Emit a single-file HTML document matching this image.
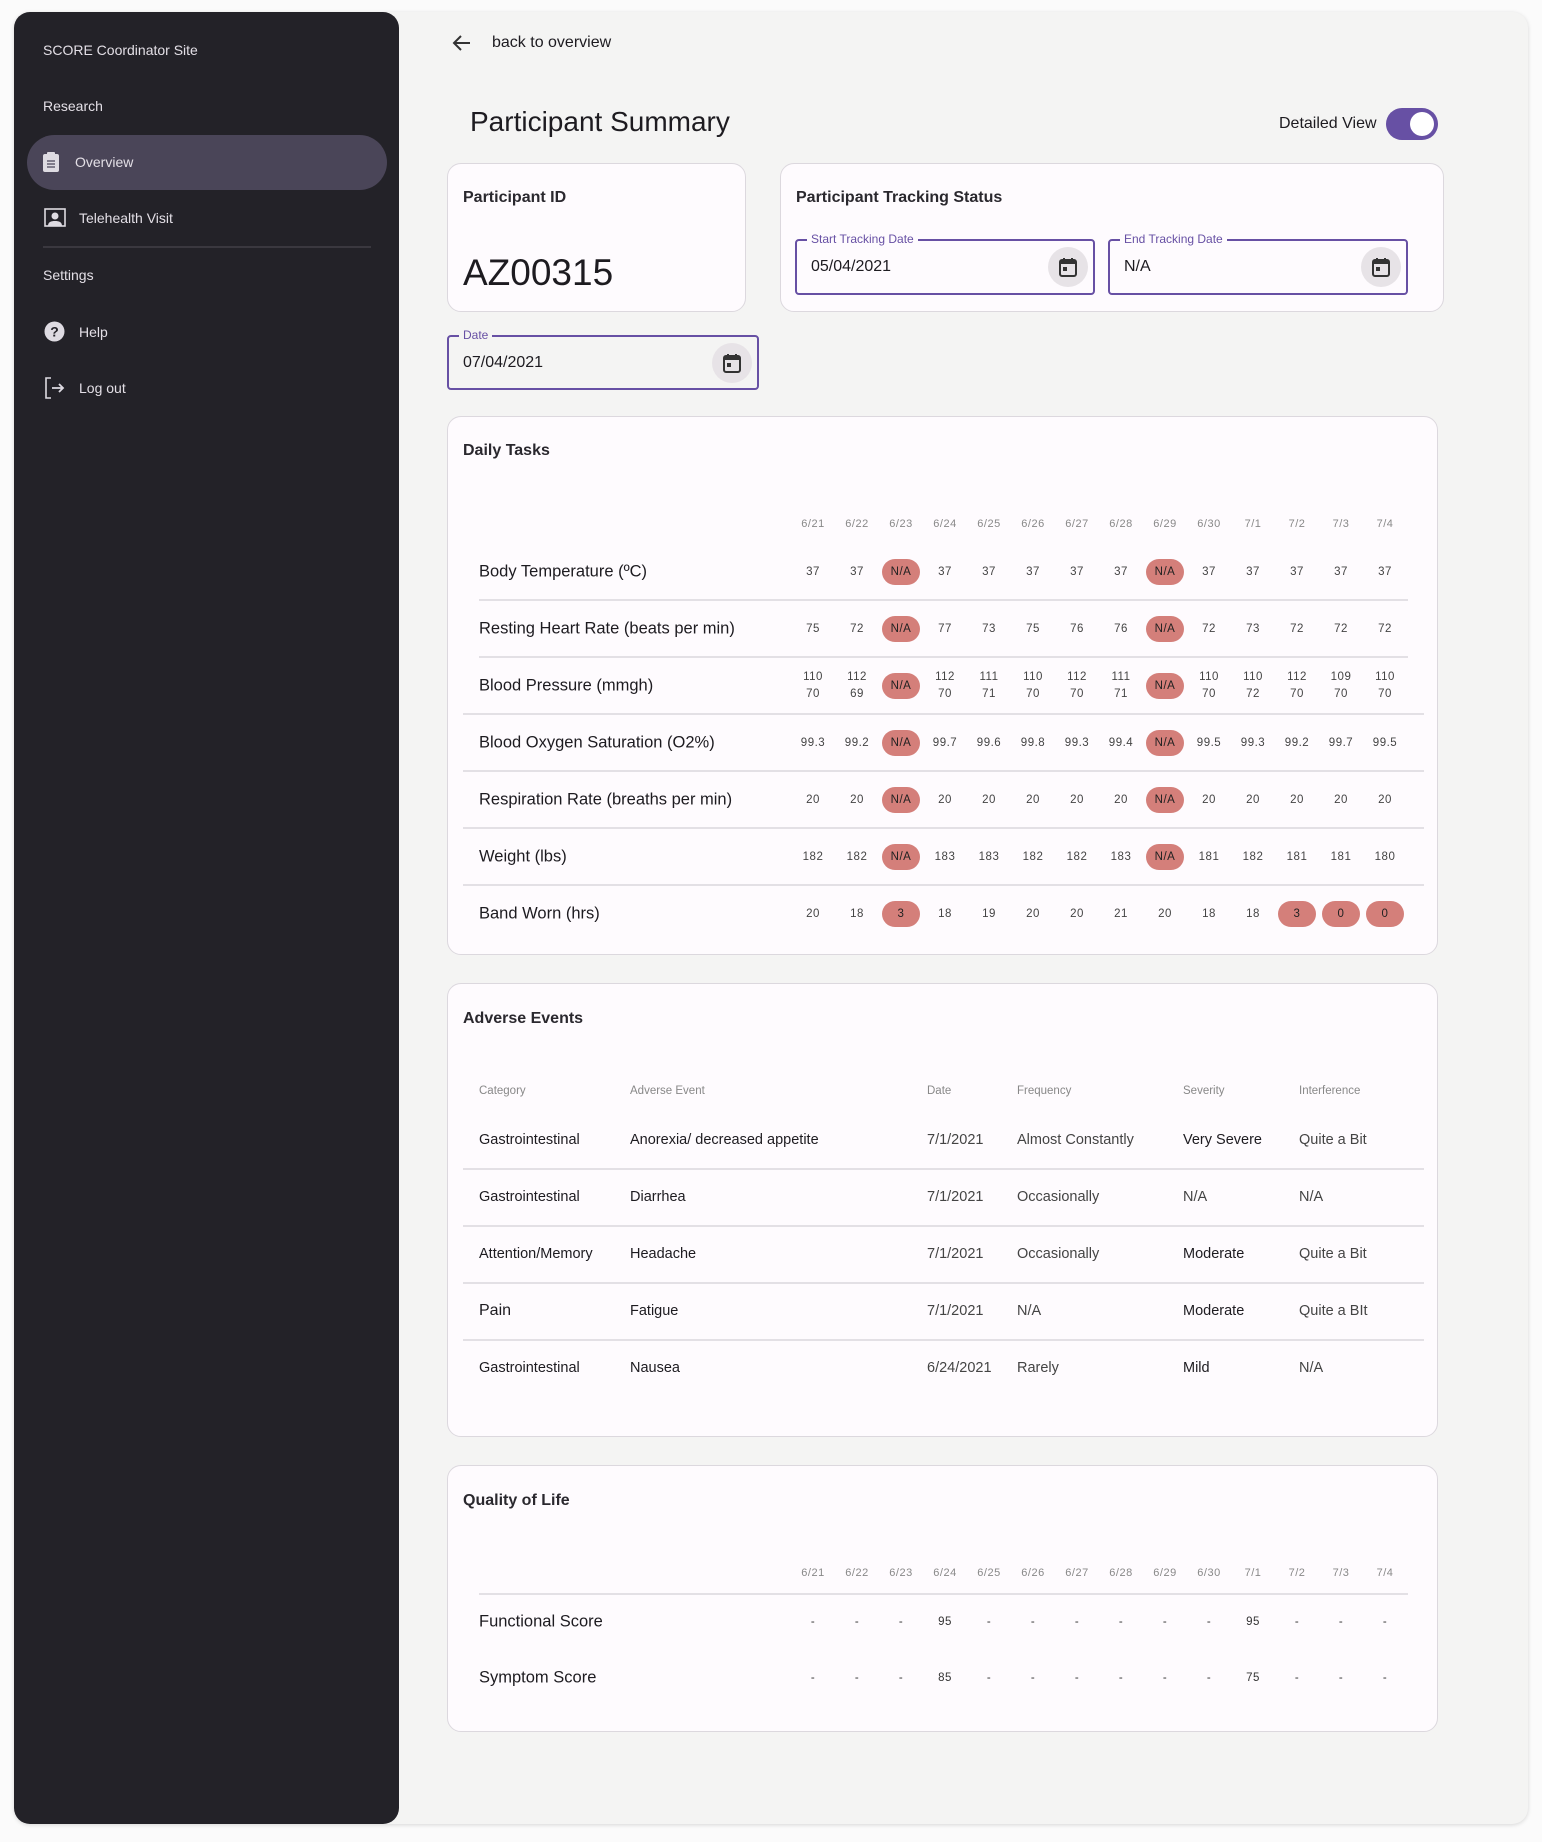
<!DOCTYPE html>
<html><head><meta charset="utf-8"><style>
*{box-sizing:border-box;margin:0;padding:0}
body{width:1542px;height:1842px;background:#fbfbfb;font-family:"Liberation Sans",sans-serif;position:relative;overflow:hidden;color:#1d1b20}
.frame{position:absolute;left:14px;top:12px;width:1514px;height:1812px;background:#f4f4f3;border-radius:16px;box-shadow:0 1px 4px rgba(0,0,0,.15)}
.side{position:absolute;left:14px;top:12px;width:385px;height:1812px;background:#232228;border-radius:16px}
.ab{position:absolute}
.st{position:absolute;color:#e3dfe6;font-size:14px;transform:translateY(-50%)}
.pill{position:absolute;left:27px;top:135px;width:360px;height:55px;background:#4a4558;border-radius:28px}
.card{position:absolute;background:#fefbfe;border:1.5px solid #dcd8de;border-radius:14px}
.ct{position:absolute;left:15px;font-size:16px;font-weight:bold;color:#2a282e;transform:translateY(-50%)}
.field{position:absolute;border:2px solid #6750a4;border-radius:4px}
.field .lb{position:absolute;top:-9px;left:10px;background:#fefbfe;color:#6750a4;font-size:12px;padding:0 4px;line-height:14px}
.fcard .lb{background:#f4f4f3}
.field .v{position:absolute;left:14px;top:50%;transform:translateY(-50%);font-size:16px;color:#1d1b20}
.field .ic{position:absolute;right:5px;top:50%;transform:translateY(-50%);width:40px;height:40px;border-radius:50%;background:#e7e3e7;display:flex;align-items:center;justify-content:center}
.row{position:absolute;left:0;width:100%;height:0}
.row .l{position:absolute;left:31px;top:0;transform:translateY(-50%);font-size:16.5px;color:#1d1b20;white-space:nowrap}
.cells{position:absolute;left:343px;top:0;display:flex}
.c{width:44px;height:0;display:flex;align-items:center;justify-content:center;font-size:11.5px;color:#444;letter-spacing:.5px;text-align:center;line-height:17px}
.c b{font-weight:normal;background:#d47f7a;color:#222;border-radius:13px;width:38px;height:26px;display:flex;align-items:center;justify-content:center;flex:none}
.hd .c{color:#888;font-size:11px}
.dv{position:absolute;height:2px;background:#e3e0e5}
.ae{position:absolute;transform:translateY(-50%);font-size:14.5px;color:#1d1b20;white-space:nowrap}
.ah{position:absolute;transform:translateY(-50%);font-size:11.5px;color:#888}
.q .c{color:#333}
</style></head><body>
<div class="frame"></div>
<div class="side"></div>
<div class="st" style="left:43px;top:50px">SCORE Coordinator Site</div>
<div class="st" style="left:43px;top:106px">Research</div>
<div class="pill"></div>
<svg class="ab" style="left:42px;top:151px" width="18" height="22" viewBox="0 0 18 22"><rect x="1" y="3" width="16" height="18" rx="2" fill="#dedbe2"/><rect x="5" y="1" width="8" height="4" rx="1" fill="#dedbe2"/><path d="M5 10h8M5 13h8M5 16h8" stroke="#4a4558" stroke-width="1.3"/></svg>
<div class="st" style="left:75px;top:162px">Overview</div>
<svg class="ab" style="left:44px;top:208px" width="22" height="20" viewBox="0 0 22 20"><rect x="1" y="1" width="20" height="17" fill="none" stroke="#dedbe2" stroke-width="1.6"/><circle cx="11" cy="8" r="3.5" fill="#dedbe2"/><path d="M4 18c0-4 3-5 7-5s7 1 7 5z" fill="#dedbe2"/></svg>
<div class="st" style="left:79px;top:218px">Telehealth Visit</div>
<div class="ab" style="left:43px;top:246px;width:328px;height:2px;background:#3a383f"></div>
<div class="st" style="left:43px;top:275px">Settings</div>
<svg class="ab" style="left:44px;top:321px" width="21" height="21" viewBox="0 0 21 21"><circle cx="10.5" cy="10.5" r="10" fill="#dedbe2"/><text x="10.5" y="15.5" font-size="14" font-weight="bold" text-anchor="middle" fill="#232228" font-family="Liberation Sans">?</text></svg>
<div class="st" style="left:79px;top:332px">Help</div>
<svg class="ab" style="left:44px;top:377px" width="22" height="22" viewBox="0 0 22 22"><path d="M7 1H2v20h5" fill="none" stroke="#dedbe2" stroke-width="1.6"/><path d="M8 11h11M15 7l4 4-4 4" fill="none" stroke="#dedbe2" stroke-width="1.8"/></svg>
<div class="st" style="left:79px;top:388px">Log out</div>

<svg class="ab" style="left:452px;top:34px" width="20" height="18" viewBox="0 0 20 18"><path d="M18 9H3M9 2L2 9l7 7" fill="none" stroke="#333" stroke-width="2"/></svg>
<div class="ab" style="left:492px;top:34px;font-size:16px;color:#1d1b20">back to overview</div>
<div class="ab" style="left:470px;top:106px;font-size:28px;color:#1d1b20">Participant Summary</div>
<div class="ab" style="left:1279px;top:115px;font-size:16px;color:#1d1b20">Detailed View</div>
<div class="ab" style="left:1386px;top:108px;width:52px;height:32px;border-radius:16px;background:#6750a4"></div>
<div class="ab" style="left:1410px;top:112px;width:24px;height:24px;border-radius:50%;background:#fff"></div>

<div class="card" style="left:447px;top:163px;width:299px;height:149px">
 <div class="ct" style="top:34px">Participant ID</div>
 <div class="ab" style="left:15px;top:88px;font-size:37px;color:#1d1b20">AZ00315</div>
</div>
<div class="card" style="left:780px;top:163px;width:664px;height:149px">
 <div class="ct" style="top:34px">Participant Tracking Status</div>
 <div class="field" style="left:14px;top:75px;width:300px;height:56px"><span class="lb">Start Tracking Date</span><span class="v">05/04/2021</span><span class="ic"><svg width="18" height="20" viewBox="0 0 18 20"><rect x="1" y="3" width="16" height="16" rx="2" fill="none" stroke="#333" stroke-width="2"/><rect x="1" y="3" width="16" height="4" fill="#333"/><path d="M5 1v3M13 1v3" stroke="#333" stroke-width="2"/><rect x="4" y="10" width="4" height="4" fill="#333"/></svg></span></div>
 <div class="field" style="left:327px;top:75px;width:300px;height:56px"><span class="lb">End Tracking Date</span><span class="v">N/A</span><span class="ic"><svg width="18" height="20" viewBox="0 0 18 20"><rect x="1" y="3" width="16" height="16" rx="2" fill="none" stroke="#333" stroke-width="2"/><rect x="1" y="3" width="16" height="4" fill="#333"/><path d="M5 1v3M13 1v3" stroke="#333" stroke-width="2"/><rect x="4" y="10" width="4" height="4" fill="#333"/></svg></span></div>
</div>
<div class="field fcard" style="left:447px;top:335px;width:312px;height:55px"><span class="lb">Date</span><span class="v">07/04/2021</span><span class="ic"><svg width="18" height="20" viewBox="0 0 18 20"><rect x="1" y="3" width="16" height="16" rx="2" fill="none" stroke="#333" stroke-width="2"/><rect x="1" y="3" width="16" height="4" fill="#333"/><path d="M5 1v3M13 1v3" stroke="#333" stroke-width="2"/><rect x="4" y="10" width="4" height="4" fill="#333"/></svg></span></div>

<div class="card" style="left:447px;top:416px;width:991px;height:539px">
 <div class="ct" style="top:34px">Daily Tasks</div>
 <div class="row hd" style="top:107px"><div class="cells"><div class="c">6/21</div><div class="c">6/22</div><div class="c">6/23</div><div class="c">6/24</div><div class="c">6/25</div><div class="c">6/26</div><div class="c">6/27</div><div class="c">6/28</div><div class="c">6/29</div><div class="c">6/30</div><div class="c">7/1</div><div class="c">7/2</div><div class="c">7/3</div><div class="c">7/4</div></div></div>
 <div class="row" style="top:155px"><div class="l">Body Temperature (ºC)</div><div class="cells"><div class="c">37</div><div class="c">37</div><div class="c"><b>N/A</b></div><div class="c">37</div><div class="c">37</div><div class="c">37</div><div class="c">37</div><div class="c">37</div><div class="c"><b>N/A</b></div><div class="c">37</div><div class="c">37</div><div class="c">37</div><div class="c">37</div><div class="c">37</div></div></div>
 <div class="dv" style="left:31px;width:929px;top:182px"></div>
 <div class="row" style="top:212px"><div class="l">Resting Heart Rate (beats per min)</div><div class="cells"><div class="c">75</div><div class="c">72</div><div class="c"><b>N/A</b></div><div class="c">77</div><div class="c">73</div><div class="c">75</div><div class="c">76</div><div class="c">76</div><div class="c"><b>N/A</b></div><div class="c">72</div><div class="c">73</div><div class="c">72</div><div class="c">72</div><div class="c">72</div></div></div>
 <div class="dv" style="left:31px;width:929px;top:239px"></div>
 <div class="row" style="top:269px"><div class="l">Blood Pressure (mmgh)</div><div class="cells"><div class="c">110<br>70</div><div class="c">112<br>69</div><div class="c"><b>N/A</b></div><div class="c">112<br>70</div><div class="c">111<br>71</div><div class="c">110<br>70</div><div class="c">112<br>70</div><div class="c">111<br>71</div><div class="c"><b>N/A</b></div><div class="c">110<br>70</div><div class="c">110<br>72</div><div class="c">112<br>70</div><div class="c">109<br>70</div><div class="c">110<br>70</div></div></div>
 <div class="dv" style="left:15px;width:961px;top:296px"></div>
 <div class="row" style="top:326px"><div class="l">Blood Oxygen Saturation (O2%)</div><div class="cells"><div class="c">99.3</div><div class="c">99.2</div><div class="c"><b>N/A</b></div><div class="c">99.7</div><div class="c">99.6</div><div class="c">99.8</div><div class="c">99.3</div><div class="c">99.4</div><div class="c"><b>N/A</b></div><div class="c">99.5</div><div class="c">99.3</div><div class="c">99.2</div><div class="c">99.7</div><div class="c">99.5</div></div></div>
 <div class="dv" style="left:15px;width:961px;top:353px"></div>
 <div class="row" style="top:383px"><div class="l">Respiration Rate (breaths per min)</div><div class="cells"><div class="c">20</div><div class="c">20</div><div class="c"><b>N/A</b></div><div class="c">20</div><div class="c">20</div><div class="c">20</div><div class="c">20</div><div class="c">20</div><div class="c"><b>N/A</b></div><div class="c">20</div><div class="c">20</div><div class="c">20</div><div class="c">20</div><div class="c">20</div></div></div>
 <div class="dv" style="left:15px;width:961px;top:410px"></div>
 <div class="row" style="top:440px"><div class="l">Weight (lbs)</div><div class="cells"><div class="c">182</div><div class="c">182</div><div class="c"><b>N/A</b></div><div class="c">183</div><div class="c">183</div><div class="c">182</div><div class="c">182</div><div class="c">183</div><div class="c"><b>N/A</b></div><div class="c">181</div><div class="c">182</div><div class="c">181</div><div class="c">181</div><div class="c">180</div></div></div>
 <div class="dv" style="left:15px;width:961px;top:467px"></div>
 <div class="row" style="top:497px"><div class="l">Band Worn (hrs)</div><div class="cells"><div class="c">20</div><div class="c">18</div><div class="c"><b>3</b></div><div class="c">18</div><div class="c">19</div><div class="c">20</div><div class="c">20</div><div class="c">21</div><div class="c">20</div><div class="c">18</div><div class="c">18</div><div class="c"><b>3</b></div><div class="c"><b>0</b></div><div class="c"><b>0</b></div></div></div>
</div>

<div class="card" style="left:447px;top:983px;width:991px;height:454px">
 <div class="ct" style="top:35px">Adverse Events</div>
 <div class="ah" style="left:31px;top:107px">Category</div><div class="ah" style="left:182px;top:107px">Adverse Event</div><div class="ah" style="left:479px;top:107px">Date</div><div class="ah" style="left:569px;top:107px">Frequency</div><div class="ah" style="left:735px;top:107px">Severity</div><div class="ah" style="left:851px;top:107px">Interference</div>
 <div class="ae" style="left:31px;top:156px">Gastrointestinal</div><div class="ae" style="left:182px;top:156px">Anorexia/ decreased appetite</div><div class="ae" style="left:479px;top:156px;color:#444">7/1/2021</div><div class="ae" style="left:569px;top:156px;color:#444">Almost Constantly</div><div class="ae" style="left:735px;top:156px">Very Severe</div><div class="ae" style="left:851px;top:156px;color:#444">Quite a Bit</div>
 <div class="dv" style="left:15px;width:961px;top:184px"></div>
 <div class="ae" style="left:31px;top:213px">Gastrointestinal</div><div class="ae" style="left:182px;top:213px">Diarrhea</div><div class="ae" style="left:479px;top:213px;color:#444">7/1/2021</div><div class="ae" style="left:569px;top:213px;color:#444">Occasionally</div><div class="ae" style="left:735px;top:213px;color:#444">N/A</div><div class="ae" style="left:851px;top:213px;color:#444">N/A</div>
 <div class="dv" style="left:15px;width:961px;top:241px"></div>
 <div class="ae" style="left:31px;top:270px">Attention/Memory</div><div class="ae" style="left:182px;top:270px">Headache</div><div class="ae" style="left:479px;top:270px;color:#444">7/1/2021</div><div class="ae" style="left:569px;top:270px;color:#444">Occasionally</div><div class="ae" style="left:735px;top:270px">Moderate</div><div class="ae" style="left:851px;top:270px;color:#444">Quite a Bit</div>
 <div class="dv" style="left:15px;width:961px;top:298px"></div>
 <div class="ae" style="left:31px;top:327px;font-size:16px">Pain</div><div class="ae" style="left:182px;top:327px">Fatigue</div><div class="ae" style="left:479px;top:327px;color:#444">7/1/2021</div><div class="ae" style="left:569px;top:327px;color:#444">N/A</div><div class="ae" style="left:735px;top:327px">Moderate</div><div class="ae" style="left:851px;top:327px;color:#444">Quite a BIt</div>
 <div class="dv" style="left:15px;width:961px;top:355px"></div>
 <div class="ae" style="left:31px;top:384px">Gastrointestinal</div><div class="ae" style="left:182px;top:384px">Nausea</div><div class="ae" style="left:479px;top:384px;color:#444">6/24/2021</div><div class="ae" style="left:569px;top:384px;color:#444">Rarely</div><div class="ae" style="left:735px;top:384px">Mild</div><div class="ae" style="left:851px;top:384px;color:#444">N/A</div>
</div>

<div class="card" style="left:447px;top:1465px;width:991px;height:267px">
 <div class="ct" style="top:35px">Quality of Life</div>
 <div class="row hd" style="top:107px"><div class="cells"><div class="c">6/21</div><div class="c">6/22</div><div class="c">6/23</div><div class="c">6/24</div><div class="c">6/25</div><div class="c">6/26</div><div class="c">6/27</div><div class="c">6/28</div><div class="c">6/29</div><div class="c">6/30</div><div class="c">7/1</div><div class="c">7/2</div><div class="c">7/3</div><div class="c">7/4</div></div></div>
 <div class="dv" style="left:31px;width:929px;top:127px"></div>
 <div class="row q" style="top:156px"><div class="l">Functional Score</div><div class="cells"><div class="c">-</div><div class="c">-</div><div class="c">-</div><div class="c">95</div><div class="c">-</div><div class="c">-</div><div class="c">-</div><div class="c">-</div><div class="c">-</div><div class="c">-</div><div class="c">95</div><div class="c">-</div><div class="c">-</div><div class="c">-</div></div></div>
 <div class="row q" style="top:212px"><div class="l">Symptom Score</div><div class="cells"><div class="c">-</div><div class="c">-</div><div class="c">-</div><div class="c">85</div><div class="c">-</div><div class="c">-</div><div class="c">-</div><div class="c">-</div><div class="c">-</div><div class="c">-</div><div class="c">75</div><div class="c">-</div><div class="c">-</div><div class="c">-</div></div></div>
</div>
</body></html>
